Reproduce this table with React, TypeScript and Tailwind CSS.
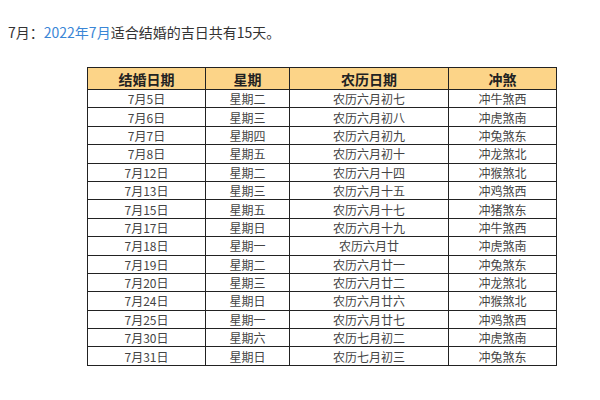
import React from "react";

const rows: [string, string, string, string][] = [
  ["7月5日", "星期二", "农历六月初七", "冲牛煞西"],
  ["7月6日", "星期三", "农历六月初八", "冲虎煞南"],
  ["7月7日", "星期四", "农历六月初九", "冲兔煞东"],
  ["7月8日", "星期五", "农历六月初十", "冲龙煞北"],
  ["7月12日", "星期二", "农历六月十四", "冲猴煞北"],
  ["7月13日", "星期三", "农历六月十五", "冲鸡煞西"],
  ["7月15日", "星期五", "农历六月十七", "冲猪煞东"],
  ["7月17日", "星期日", "农历六月十九", "冲牛煞西"],
  ["7月18日", "星期一", "农历六月廿", "冲虎煞南"],
  ["7月19日", "星期二", "农历六月廿一", "冲兔煞东"],
  ["7月20日", "星期三", "农历六月廿二", "冲龙煞北"],
  ["7月24日", "星期日", "农历六月廿六", "冲猴煞北"],
  ["7月25日", "星期一", "农历六月廿七", "冲鸡煞西"],
  ["7月30日", "星期六", "农历七月初二", "冲虎煞南"],
  ["7月31日", "星期日", "农历七月初三", "冲兔煞东"],
];

export default function App() {
  return (
    <div
      className="w-[600px] h-[400px] bg-white overflow-hidden"
      style={{ fontFamily: '"Noto Sans CJK SC", "Noto Sans", sans-serif' }}
    >
      <div className="pt-[22px] pl-[8px] text-[14px] leading-[20px] text-[#333]">
        7月：<span className="text-[#3a86d6]">2022年7月</span>适合结婚的吉日共有15天。
      </div>
      <div className="pt-[25px] pl-[87px]">
        <table className="border-collapse border-[1.5px] border-[#222] text-center">
          <colgroup>
            <col className="w-[118px]" />
            <col className="w-[84px]" />
            <col className="w-[159px]" />
            <col className="w-[108px]" />
          </colgroup>
          <thead>
            <tr className="bg-[#fcd488] h-[22px]">
              {["结婚日期", "星期", "农历日期", "冲煞"].map((h) => (
                <th
                  key={h}
                  className="border border-[#222] p-0 text-[14px] leading-[20px] font-bold text-[#222]"
                >
                  {h}
                </th>
              ))}
            </tr>
          </thead>
          <tbody>
            {rows.map((r, i) => (
              <tr key={i} className="h-[18.4px]">
                {r.map((c, j) => (
                  <td
                    key={j}
                    className="border border-[#222] p-0 text-[12px] leading-[17px] text-[#444]"
                  >
                    {c}
                  </td>
                ))}
              </tr>
            ))}
          </tbody>
        </table>
      </div>
    </div>
  );
}
